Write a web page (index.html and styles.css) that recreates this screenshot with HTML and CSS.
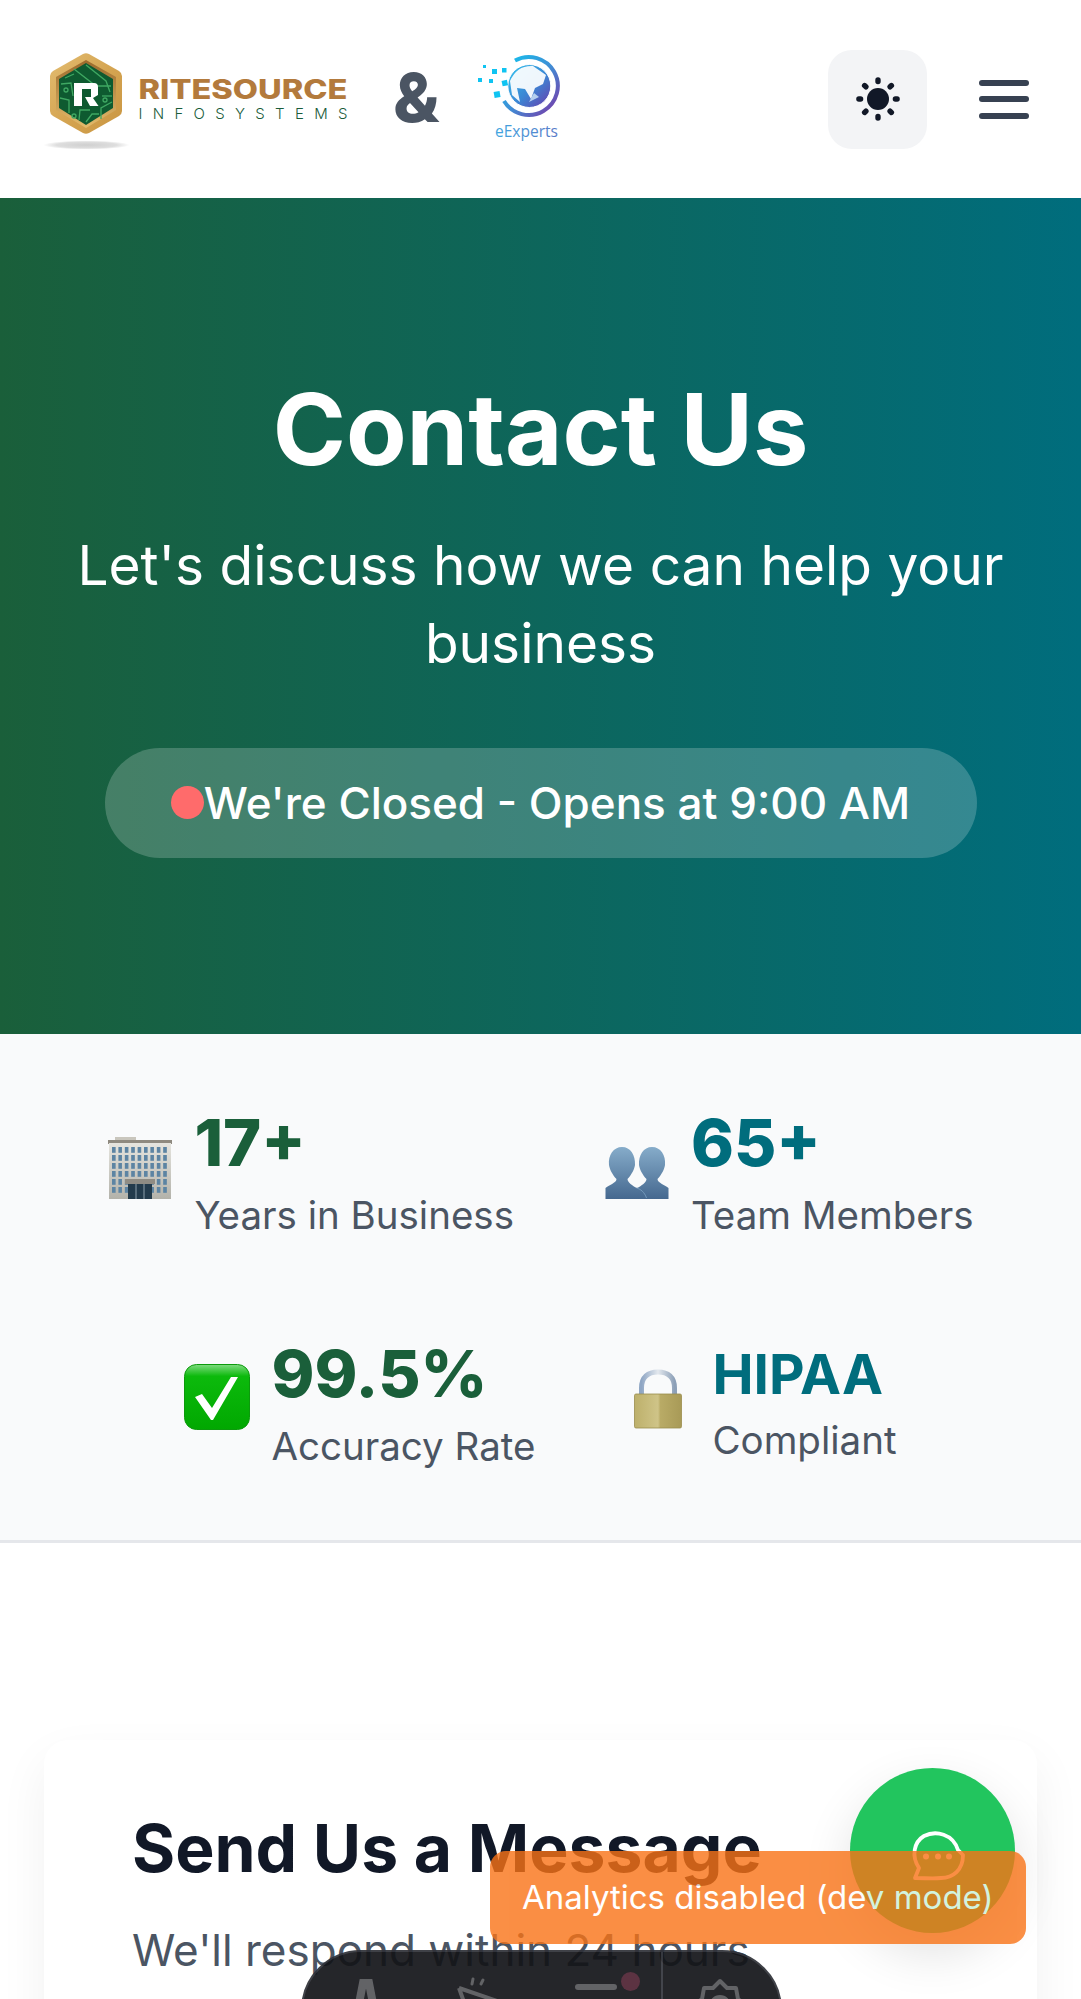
FILE: index.html
```html
<!DOCTYPE html>
<html lang="en">
<head>
<meta charset="utf-8">
<title>Contact Us</title>
<link rel="stylesheet" href="styles.css">
</head>
<body>
<div class="page">
  <header class="site-header">
    <div class="logos">
      <svg class="logo-rite" viewBox="0 0 306 100" aria-hidden="true">
        <defs>
          <linearGradient id="gold" x1="0" y1="0" x2="1" y2="1"><stop offset="0" stop-color="#e3bd72"/><stop offset=".5" stop-color="#d5a552"/><stop offset="1" stop-color="#c99541"/></linearGradient>
          <linearGradient id="goldin" x1="0" y1="0" x2="0" y2="1"><stop offset="0" stop-color="#9c6a2c"/><stop offset="1" stop-color="#e3bb6c"/></linearGradient>
          <radialGradient id="shadow"><stop offset="0" stop-color="#cfcfcf"/><stop offset=".7" stop-color="#dedede"/><stop offset="1" stop-color="#fff"/></radialGradient>
        </defs>
        <ellipse cx="42.500" cy="95" rx="43" ry="4.500" fill="url(#shadow)"/>
        <path d="M39 4 Q42 2.400 45 4 L75 21 Q78 23 78 26 L78 61 Q78 64 75 66 L45 83 Q42 84.600 39 83 L9 66 Q6 64 6 61 L6 26 Q6 23 9 21Z" fill="url(#gold)"/>
        <path d="M42 10 L72 27 L72 60 L42 78 L12 60 L12 27Z" fill="url(#goldin)"/>
        <path d="M42 13 L69 29 L69 58 L42 75 L15 58 L15 29Z" fill="#0e5a30"/>
        <g fill="none" stroke="#3fa862" stroke-width="1.300">
          <path d="M30 19 L52 36 L67 36"/><path d="M42 15 L62 31 L66 42"/><path d="M17 34 L27 33 L29 46"/><path d="M16 48 L25 50 L25 63"/><path d="M57 69 L57 58 L68 52"/><path d="M35 70 L36 60 L46 60"/><path d="M58 46 L68 46"/><path d="M21 28 L30 24"/><path d="M42 72 L48 64 L55 64"/><circle cx="22" cy="40" r="2"/><circle cx="61" cy="50" r="2"/><circle cx="30" cy="66" r="2"/>
        </g>
        <path d="M30 33 H50 Q54 33 54 37 V45 L49 48 L54.500 56 H46 L41 47 H47 V39 H38 V56 H30Z" fill="#fff"/>
        <text class="rite-name" x="94.500" y="49" textLength="209" lengthAdjust="spacingAndGlyphs">RITESOURCE</text>
        <text class="rite-sub" x="94.500" y="69" textLength="209" lengthAdjust="spacing">INFOSYSTEMS</text>
      </svg>
      <span class="amp">&amp;</span>
      <svg class="logo-ee" viewBox="0 0 95 95" aria-hidden="true">
        <defs>
          <linearGradient id="ring" x1="0" y1="0" x2="1" y2="1"><stop offset="0" stop-color="#12c2ee"/><stop offset=".5" stop-color="#3f8fd6"/><stop offset="1" stop-color="#7b35a6"/></linearGradient>
          <linearGradient id="globe" x1="0" y1="0" x2="1" y2="1"><stop offset="0" stop-color="#35c6f0"/><stop offset=".55" stop-color="#3b86d4"/><stop offset="1" stop-color="#6b3bab"/></linearGradient>
          <linearGradient id="eetext" x1="0" y1="0" x2="1" y2="0"><stop offset="0" stop-color="#41a6e0"/><stop offset="1" stop-color="#5a7bc8"/></linearGradient>
        </defs>
        <path d="M44 5.500 A29 29 0 1 1 33 46" fill="none" stroke="url(#ring)" stroke-width="4"/>
        <circle cx="58.300" cy="31" r="21.500" fill="url(#globe)" stroke="#fff" stroke-width="1"/>
        <path d="M39 26 Q46 10 62 11 L75 20 L72 29 L64 33 L60 44 L54 34 L46 33 L49 47 L41 40Z" fill="#fff" opacity=".92"/>
        <path d="M58 47 L63 38 L68 42Z" fill="#cfe6f7" opacity=".8"/>
        <g fill="#0fc4f2"><rect x="12" y="10" width="3" height="3"/><rect x="21" y="14" width="5" height="5"/><rect x="31" y="13" width="4.500" height="4.500"/><rect x="7" y="23" width="4" height="4"/><rect x="18" y="24" width="4" height="4"/><rect x="31" y="25.500" width="5.500" height="5.500" transform="rotate(-12 33 28)"/><rect x="23" y="36.500" width="6" height="6" transform="rotate(-10 26 39)"/></g>
        <text class="ee-name" x="24" y="82" textLength="63" lengthAdjust="spacingAndGlyphs">eExperts</text>
      </svg>
    </div>
    <div class="header-actions">
      <button class="theme-btn" aria-label="Toggle theme">
        <svg viewBox="0 0 44 44" aria-hidden="true">
          <circle cx="22" cy="22" r="11" fill="#111827"/>
          <g stroke="#111827" stroke-width="5.400" stroke-linecap="round">
            <path d="M22 2.900v1.700M22 39.400v1.700M2.900 22h1.700M39.400 22h1.700M8.600 8.600l1.300 1.200M34.100 34.200l1.300 1.200M8.600 35.400l1.300-1.200M34.100 9.800l1.300-1.200"/>
          </g>
        </svg>
      </button>
      <button class="menu-btn" aria-label="Open menu"><span></span><span></span><span></span></button>
    </div>
  </header>

  <section class="hero">
    <h1>Contact Us</h1>
    <p class="hero-sub">Let's discuss how we can help your business</p>
    <div class="status"><span class="status-dot"></span><span>We're Closed - Opens at 9:00 AM</span></div>
  </section>

  <section class="stats">
    <div class="stats-row">
      <div class="stat">
        <svg class="stat-icon" viewBox="-3 -4 66 66" aria-hidden="true">
          <defs>
            <linearGradient id="wall" x1="0" y1="0" x2="0" y2="1"><stop offset="0" stop-color="#e6e5df"/><stop offset="1" stop-color="#b3b2aa"/></linearGradient>
            <pattern id="win" width="6.400" height="8" patternUnits="userSpaceOnUse" x="4" y="10"><rect width="3.600" height="5.800" fill="#5c84a3"/></pattern>
          </defs>
          <rect x="7" y="0" width="21" height="4" fill="#c9c6bd"/>
          <rect x="0" y="3" width="64" height="4" fill="#8f8a80"/>
          <rect x="1" y="6" width="62" height="56" fill="url(#wall)"/>
          <rect x="4" y="10" width="57" height="48" fill="url(#win)"/>
          <rect x="17" y="42" width="30" height="5" fill="#8f8c84"/>
          <rect x="20" y="47" width="24" height="15" fill="#233b4c"/>
          <path d="M28 47v15M36 47v15" stroke="#8ea0ab" stroke-width="1"/>
        </svg>
        <div class="stat-text"><div class="stat-num green">17+</div><div class="stat-label">Years in Business</div></div>
      </div>
      <div class="stat">
        <svg class="stat-icon" viewBox="-3.500 -14 66 66" aria-hidden="true">
          <defs><linearGradient id="bust" x1="0" y1="0" x2="0" y2="1"><stop offset="0" stop-color="#86acca"/><stop offset="1" stop-color="#45688f"/></linearGradient></defs>
          <path d="M0 52V41C3 38 11 36 11 32C7 28 4 22 3.500 18C2.500 8 8 0 16.500 0C25 0 30 8 29.500 18C29 22 26 28 22 32C22 35 27 39 31.500 41V52Z" fill="url(#bust)"/>
          <path d="M63 52V41C60 38 52 36 52 32C56 28 59 22 59.500 18C60.500 8 55 0 46.500 0C38 0 33 8 33.500 18C34 22 37 28 41 32C41 35 36 39 31.500 41V52Z" fill="url(#bust)"/>
          <path d="M31 41C35 42 39 45 41 51" fill="none" stroke="#7ea3c4" stroke-width=".8"/>
        </svg>
        <div class="stat-text"><div class="stat-num teal">65+</div><div class="stat-label">Team Members</div></div>
      </div>
    </div>
    <div class="stats-row row-two">
      <div class="stat">
        <svg class="stat-icon" viewBox="-2 0 66 66" aria-hidden="true">
          <defs><linearGradient id="chk" x1="0" y1="0" x2="0" y2="1"><stop offset="0" stop-color="#7fdb80"/><stop offset=".18" stop-color="#0cba0c"/><stop offset="1" stop-color="#01a801"/></linearGradient></defs>
          <rect x="0.500" y="0.500" width="65" height="65" rx="12" fill="url(#chk)" stroke="#0c9a0c"/>
          <path d="M11 33 L18 30 L28 44 L47 13 H54 L29 56 H27Z" fill="#fff"/>
        </svg>
        <div class="stat-text"><div class="stat-num green">99.5%</div><div class="stat-label">Accuracy Rate</div></div>
      </div>
      <div class="stat">
        <svg class="stat-icon lock" viewBox="-11 -8 66 66" aria-hidden="true">
          <defs>
            <linearGradient id="brass" x1="0" y1="0" x2="1" y2="0"><stop offset="0" stop-color="#bdb06b"/><stop offset=".5" stop-color="#cfc488"/><stop offset=".55" stop-color="#b9ab66"/><stop offset="1" stop-color="#a89a57"/></linearGradient>
            <linearGradient id="steel" x1="0" y1="0" x2="1" y2="0"><stop offset="0" stop-color="#8fa6c4"/><stop offset=".5" stop-color="#e3e8ee"/><stop offset="1" stop-color="#8da0b8"/></linearGradient>
          </defs>
          <path d="M7.500 26V18C7.500 7 14 2 24 2C34 2 40.500 7 40.500 18V26" fill="none" stroke="url(#steel)" stroke-width="5"/>
          <rect x="0.500" y="24" width="47" height="34" rx="1.500" fill="url(#brass)" stroke="#9b8d4c" stroke-width=".8"/>
        </svg>
        <div class="stat-text"><div class="stat-num teal small">HIPAA</div><div class="stat-label">Compliant</div></div>
      </div>
    </div>
  </section>

  <main class="contact">
    <div class="card">
      <h2>Send Us a Message</h2>
      <p class="card-sub">We'll respond within 24 hours</p>
    </div>
  </main>

  <button class="chat-fab" aria-label="Open chat">
    <svg viewBox="0 0 54 48" aria-hidden="true"><path d="M4 46 L8 36 C0 24 3 10 13 4 C25 -2 42 2 47 18 L52 23 C52 38 42 46 30 46 C22 47 14 46 4 46Z" fill="none" stroke="#fff" stroke-width="3.800" stroke-linejoin="round"/><circle cx="15" cy="24.500" r="3" fill="#fff"/><circle cx="27" cy="24.500" r="3" fill="#fff"/><circle cx="38" cy="24.500" r="3" fill="#fff"/></svg>
  </button>
  <div class="toast">Analytics disabled (dev mode)</div>
  <div class="dev-bar">
    <div class="dev-tools">
      <svg class="dev-icon dev-a" viewBox="0 0 28 40" aria-hidden="true"><path d="M4 40 L11 4 H17 L24 40" fill="none" stroke="#55565a" stroke-width="8"/></svg>
      <svg class="dev-icon dev-rocket" viewBox="0 0 42 40" aria-hidden="true"><path d="M1 9 L42 23 M1 9 L12 40" fill="none" stroke="#55565a" stroke-width="4"/><path d="M15 0l-1 5M25 1l-2 4" stroke="#55565a" stroke-width="3" stroke-linecap="round"/></svg>
      <div class="dev-menu"><span class="dev-line"></span><span class="dev-dot"></span></div>
    </div>
    <div class="dev-settings">
      <svg class="dev-icon dev-gear" viewBox="0 0 56 40" aria-hidden="true"><path d="M2 26 L10 20 L12 9 L21 9 L28 2 L35 9 L44 9 L46 20 L54 26" fill="none" stroke="#55565a" stroke-width="4" stroke-linejoin="round"/><circle cx="28" cy="27" r="9" fill="none" stroke="#55565a" stroke-width="4"/></svg>
    </div>
  </div>
</div>
</body>
</html>
```

FILE: styles.css
```css
* { box-sizing: border-box; }
html, body { margin: 0; padding: 0; background: #fff; }
body { font-family: Inter, "Liberation Sans", sans-serif; }
.page { position: relative; height: 1999px; overflow: hidden; }

.site-header { height: 198px; padding: 0 52px 0 44px; display: flex; align-items: center; justify-content: space-between; background: #fff; }
.logos { display: flex; align-items: center; }
.logo-rite { width: 306px; height: 100px; margin-top: 2px; flex: none; overflow: visible; }
.rite-name { font: 800 26.500px Inter, sans-serif; fill: #b37a3c; }
.rite-sub { font: 300 15px Inter, sans-serif; fill: #1a5c3a; }
.amp { font: 800 68px/1 Inter, sans-serif; color: #4b5563; margin: -4px 0 0 43px; }
.logo-ee { width: 95px; height: 95px; margin: 6px 0 0 32px; flex: none; overflow: visible; }
.ee-name { font: 400 15.500px "Open Sans", sans-serif; fill: url(#eetext); }

.header-actions { display: flex; align-items: center; gap: 52px; }
.theme-btn { width: 99px; height: 99px; border: 0; border-radius: 24px; background: #f3f4f6; display: flex; align-items: center; justify-content: center; padding: 0; }
.theme-btn svg { width: 44px; height: 44px; }
.menu-btn { width: 50px; border: 0; background: none; padding: 0; display: flex; flex-direction: column; gap: 10.500px; }
.menu-btn span { display: block; height: 6px; border-radius: 3px; background: #374151; }

.hero { height: 836px; padding-top: 172px; background: linear-gradient(90deg, #1a5f3a 0%, #006d7d 100%); color: #fff; text-align: center; }
.hero h1 { margin: 0; font-size: 99px; line-height: 1.2; font-weight: 700; }
.hero-sub { margin: 37px auto 0; max-width: 1000px; font-size: 55px; line-height: 78px; }
.status { margin: 66px auto 0; width: 872px; height: 110px; border-radius: 55px; background: rgba(255,255,255,.2); display: flex; align-items: center; justify-content: center; font-size: 44px; font-weight: 500; }
.status-dot { width: 33px; height: 33px; border-radius: 50%; background: #ff6b6b; flex: none; }

.stats { height: 509px; padding-top: 69px; background: #f9fafb; border-bottom: 3px solid #e5e7eb; }
.stats-row { display: flex; justify-content: center; gap: 88px; padding-right: 2px; }
.row-two { margin-top: 87px; }
.stat { display: flex; align-items: center; gap: 23px; }
.stat-icon { width: 66px; height: 66px; flex: none; margin-bottom: 18px; overflow: visible; }
.stat-icon.lock { margin-bottom: 22px; }
.stat-num { font-size: 65px; line-height: 80px; font-weight: 800; }
.stat-num.small { font-size: 55px; line-height: 68px; font-weight: 700; }
.stat-label { font-size: 38.500px; line-height: 64px; color: #4b5563; }
.green { color: #1a5f3a; }
.teal { color: #006d7d; }

.contact { padding: 197px 44px 0; }
.card { height: 600px; padding: 68px 88px; border-radius: 24px; background: #fff; box-shadow: 0 20px 50px rgba(0,0,0,.06); }
.card h2 { margin: 0; font-size: 66px; line-height: 80px; font-weight: 700; color: #111827; }
.card-sub { margin: 32px 0 0; font-size: 44px; line-height: 60px; color: #4b5563; }

.chat-fab { position: absolute; left: 850px; top: 1768px; width: 165px; height: 165px; border: 0; border-radius: 50%; background: #22c55e; box-shadow: 0 20px 50px rgba(0,0,0,.12); display: flex; align-items: center; justify-content: center; padding: 11px 0 0 11px; }
.chat-fab svg { width: 54px; height: 48px; overflow: visible; }
.toast { position: absolute; left: 490px; top: 1851px; width: 536px; height: 93px; border-radius: 16px; background: #f97316; opacity: .8; color: #fff; font-size: 33px; line-height: 93px; padding-left: 32px; white-space: nowrap; }

.dev-bar { position: absolute; left: 301px; top: 1950px; width: 481px; height: 120px; border-radius: 60px; background: #131418; border: 2px solid #2f3138; opacity: .92; display: flex; }
.dev-tools { width: 360px; display: flex; align-items: flex-start; padding: 20px 0 0 49px; border-right: 2px solid #34363d; }
.dev-settings { flex: 1; padding: 27px 0 0 29px; }
.dev-icon { display: block; height: 40px; overflow: visible; flex: none; }
.dev-a { width: 28px; margin-top: 7px; }
.dev-rocket { width: 42px; margin: 7px 0 0 78px; }
.dev-gear { width: 56px; }
.dev-menu { position: relative; width: 66px; height: 40px; margin-left: 75px; flex: none; }
.dev-line { position: absolute; left: 0; top: 12px; width: 42px; height: 6px; border-radius: 3px; background: #55565a; }
.dev-dot { position: absolute; left: 46px; top: 0; width: 19px; height: 19px; border-radius: 50%; background: #4f2233; }
```
